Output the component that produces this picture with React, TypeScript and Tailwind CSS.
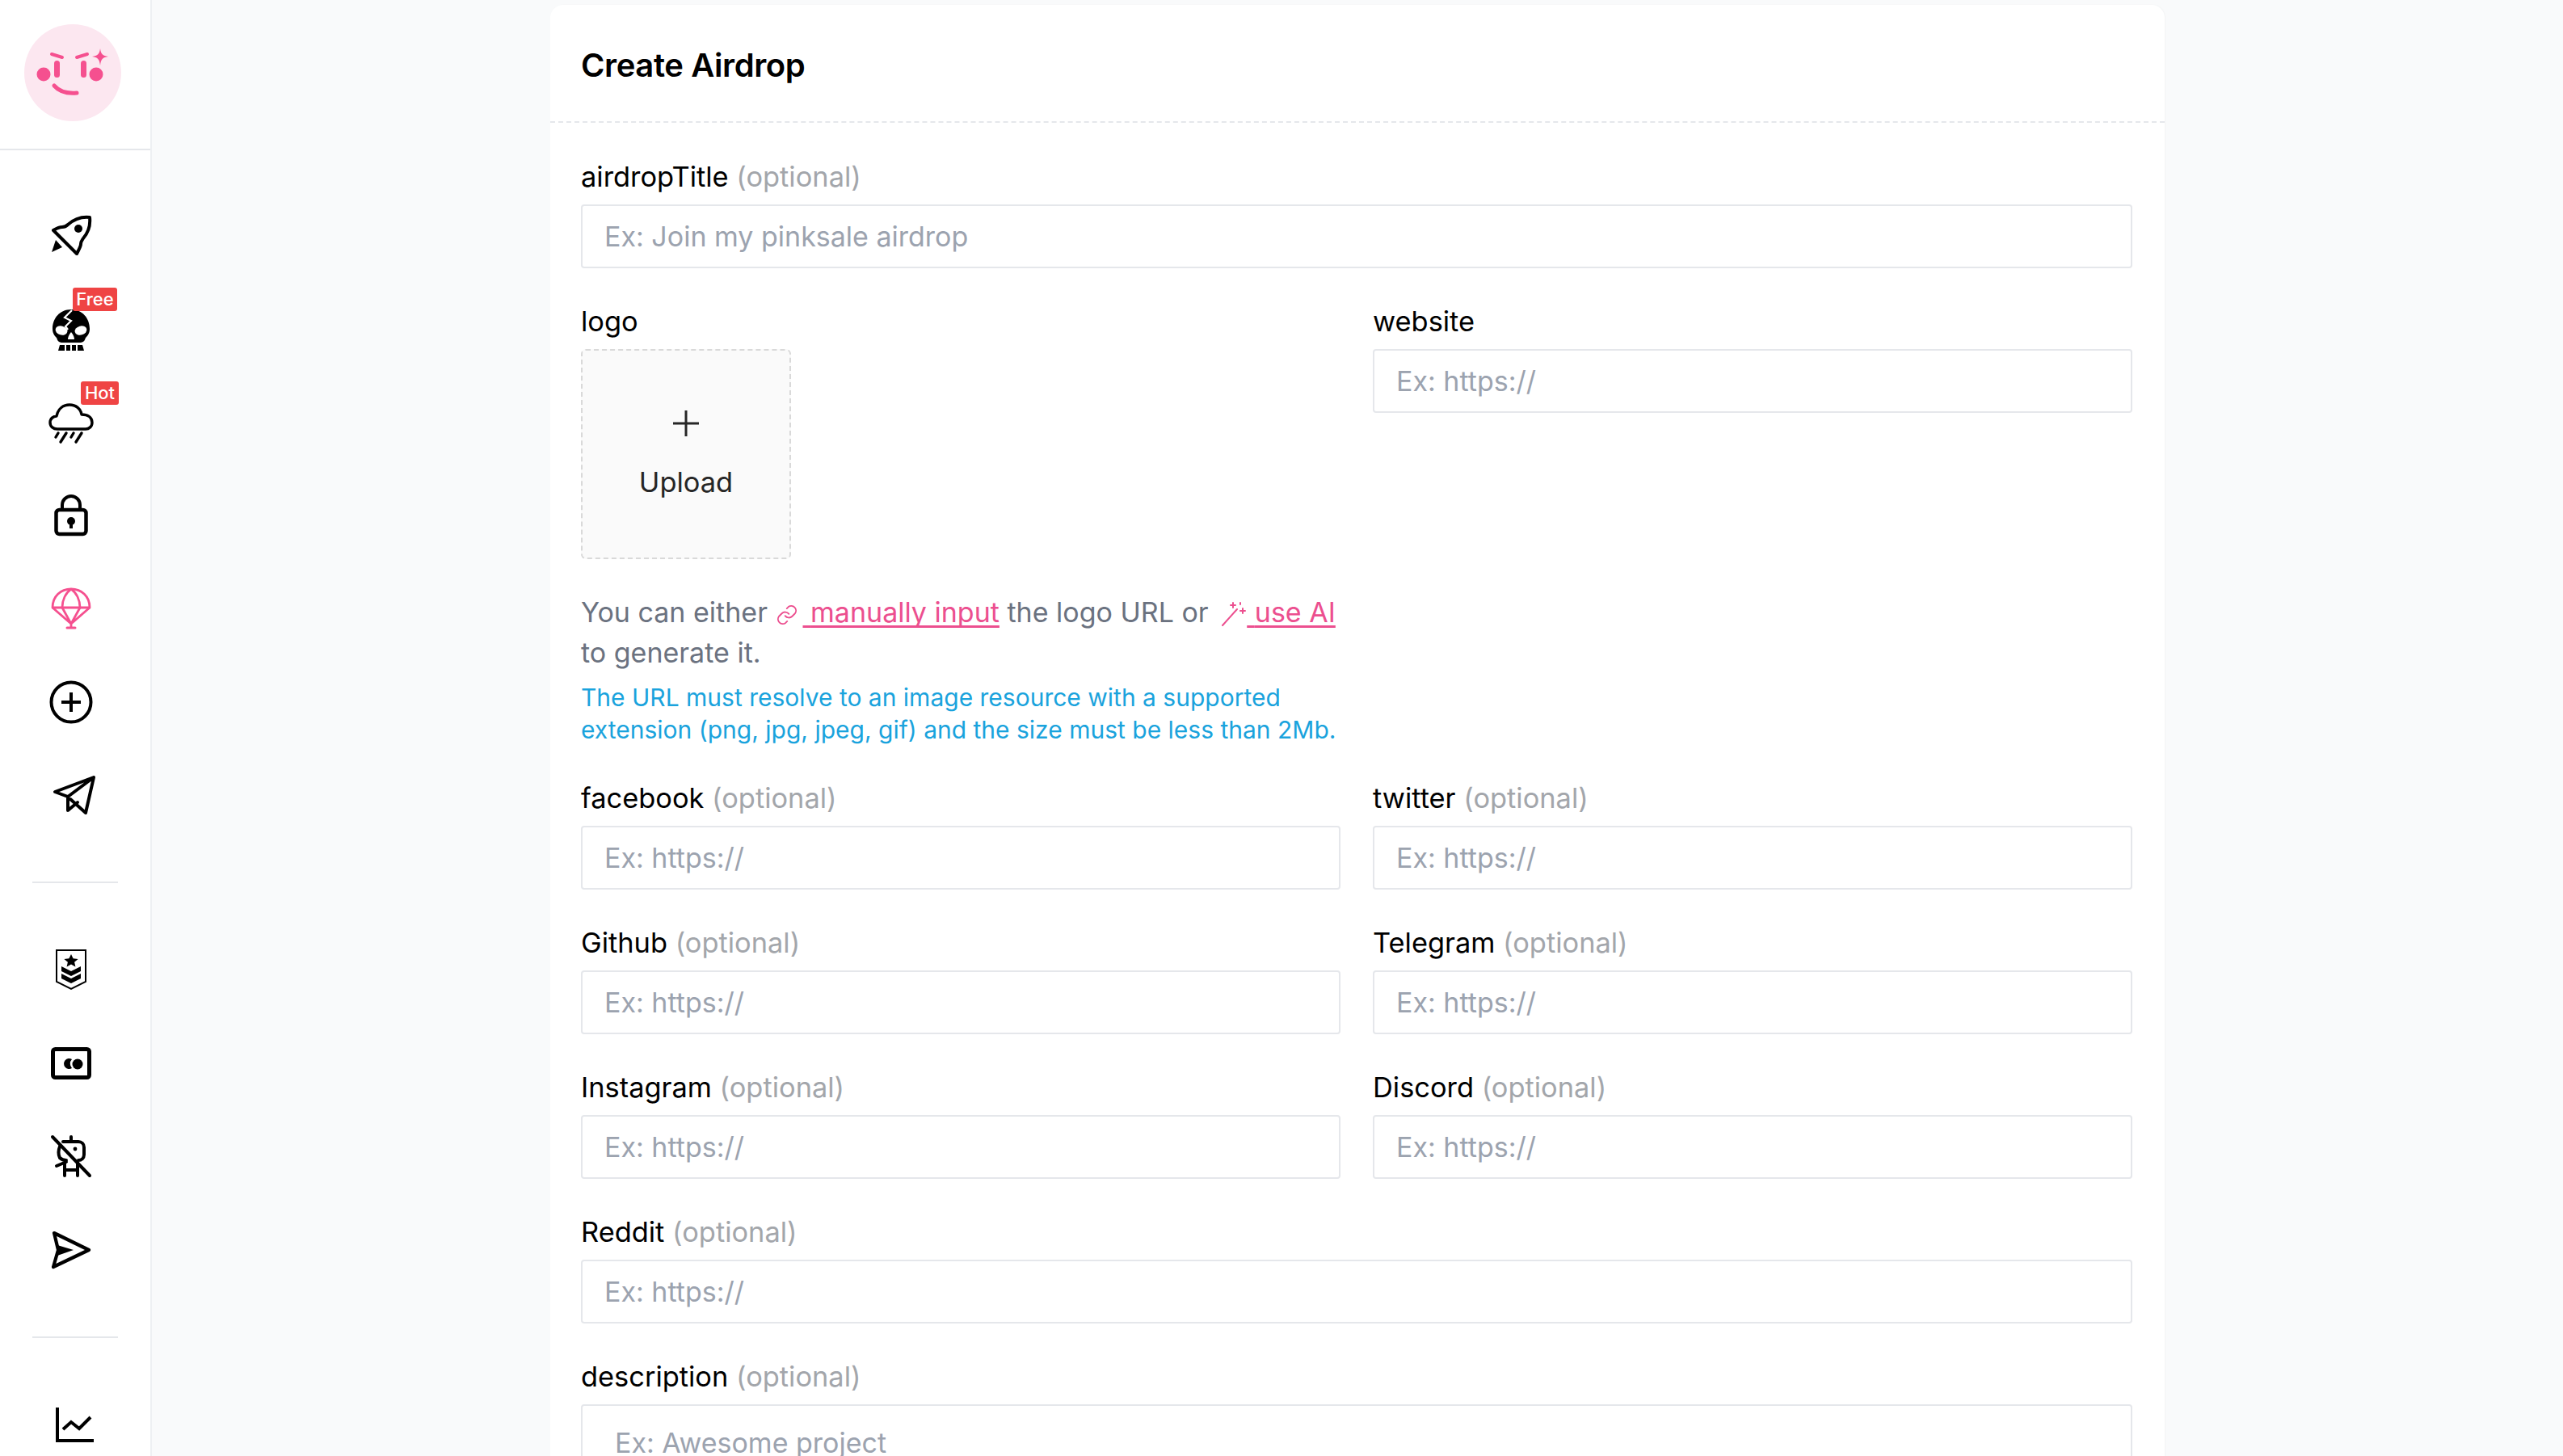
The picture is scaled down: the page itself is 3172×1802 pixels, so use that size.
import React from "react";

const P = "#f5508f";

function Logo() {
  return (
    <svg width="120" height="120" viewBox="0 0 120 120">
      <circle cx="60" cy="60" r="60" fill="#fce7f0" />
      <g fill="#f5508f">
        <circle cx="24" cy="62" r="8.5" />
        <circle cx="89" cy="62" r="8.5" />
        <rect x="37" y="45" width="7" height="21" rx="3.5" />
        <rect x="70" y="45" width="7" height="21" rx="3.5" />
        <path d="M94 30c1 7 3 9 10 10-7 1-9 3-10 11-1-8-3-10-10-11 7-1 9-3 10-10z" />
      </g>
      <g fill="none" stroke="#f5508f" strokeLinecap="round">
        <path d="M34 37l13 4M65 41l13-4" strokeWidth="4" />
        <path d="M37 76c7 8 17 10 28 9" strokeWidth="5" />
      </g>
    </svg>
  );
}

const S = { fill: "none", stroke: "#000", strokeWidth: 4, strokeLinecap: "round", strokeLinejoin: "round" } as const;

function Rocket() {
  return (
    <svg width="52" height="52" viewBox="0 0 52 52">
      <path {...S} d="M22 12C30 5 40 2 49 3c1 9-1 18-8 26-2 3-3 4-3 7 0 3-2 6-5 12L4 19c5-3 8-4 11-4 3 0 5-1 7-3z" />
      <circle cx="35" cy="17" r="5" fill="#000" />
      <path d="M7 31l8 9-13 6z" fill="#000" />
    </svg>
  );
}
function Skull() {
  return (
    <svg width="50" height="58" viewBox="0 0 50 58">
      <path d="M25 2C11 2 2 13 2 26c0 6 3 9 5 11 1 2 1 5 6 6h24c5-1 5-4 6-6 2-2 5-5 5-11C48 13 39 2 25 2z" fill="#000" />
      <path d="M26 3l-9 9 8 4-7 7 3 4" fill="none" stroke="#fff" strokeWidth="2.2" />
      <ellipse cx="13" cy="28" rx="7.5" ry="5.5" fill="#fff" transform="rotate(15 13 28)" />
      <ellipse cx="37" cy="28" rx="7.5" ry="5.5" fill="#fff" transform="rotate(-15 37 28)" />
      <path d="M25 30c-3 3-4 7-4 9h8c0-2-1-6-4-9z" fill="#fff" />
      <path d="M11 46h6v7H9zM19 46h5v7h-5zM26 46h5v7h-5zM33 46h6l2 7h-8z" fill="#000" />
    </svg>
  );
}
function Rain() {
  return (
    <svg width="56" height="56" viewBox="0 0 56 56">
      <path {...S} strokeWidth={3.4} d="M11 37c-5 0-9-3-9-8 0-5 4-8 8-8 2-10 9-14 16-14 8 0 14 5 15 12 7 0 13 3 13 10 0 5-4 8-8 8z" />
      <path {...S} strokeWidth={3.4} d="M12 42l-3 5M22 42l-7 11M31 42l-3 5M41 42l-7 11" />
    </svg>
  );
}
function Lock() {
  return (
    <svg width="42" height="52" viewBox="0 0 42 52">
      <rect x="2.5" y="19" width="37" height="30" rx="4" fill="none" stroke="#000" strokeWidth="4.5" />
      <path d="M10 19v-6a11 11 0 0 1 22 0v6" fill="none" stroke="#000" strokeWidth="4" />
      <circle cx="21" cy="33" r="5" fill="#000" />
      <path d="M19 33h4v9h-4z" fill="#000" />
    </svg>
  );
}
function Parachute() {
  return (
    <svg width="50" height="52" viewBox="0 0 50 52" fill="none" stroke={P} strokeWidth="2.8" strokeLinejoin="round">
      <path d="M2 25C2 11 12 2 25 2s23 9 23 23z" />
      <path d="M25 2c-7 5-11 14-11 23M25 2c7 5 11 14 11 23" />
      <path d="M2 25l23 20 23-20M14 25l11 20 11-20M25 45v4" />
      <path d="M20 50h10" strokeWidth="3" strokeLinecap="round" />
    </svg>
  );
}
function PlusCircle() {
  return (
    <svg width="54" height="54" viewBox="0 0 54 54" fill="none" stroke="#000" strokeWidth="4">
      <circle cx="27" cy="27" r="24.5" />
      <path d="M27 15v24M15 27h24" />
    </svg>
  );
}
function Plane() {
  return (
    <svg width="54" height="50" viewBox="0 0 54 50" {...S}>
      <path d="M51 3L3 21l16 6zM51 3L41 47 22 30M51 3L19 27v17l12-10" />
    </svg>
  );
}
function Shield() {
  return (
    <svg width="40" height="52" viewBox="0 0 40 52">
      <path d="M2 2h36v39L20 50 2 41z" fill="none" stroke="#000" strokeWidth="2" />
      <path d="M20 7l2.6 5.2 6 .7-4.5 3.8 1.3 5.8-5.4-3-5.4 3 1.3-5.8-4.5-3.8 6-.7z" fill="#000" />
      <path d="M8 22l12 6 12-6v6l-12 6-12-6zM8 31l12 6 12-6v6l-12 6-12-6z" fill="#000" />
    </svg>
  );
}
function CardIcon() {
  return (
    <svg width="50" height="40" viewBox="0 0 50 40">
      <rect x="2.5" y="2.5" width="45" height="35" rx="3" fill="none" stroke="#000" strokeWidth="5" />
      <path d="M26 15a6.5 6.5 0 1 0 0 11 8 8 0 0 1 0-11z" fill="#000" />
      <circle cx="33" cy="21" r="6.5" fill="#000" />
    </svg>
  );
}
function RobotOff() {
  return (
    <svg width="52" height="54" viewBox="0 0 52 54" {...S}>
      <path d="M3 3l46 48" />
      <path d="M26 3v5M16 9h19c4 0 7 3 7 7v9c0 4-3 7-7 7M12 15c-2 5-2 10 0 14 2 2 5 3 8 3M20 34l-12 5M18 34v17M34 34v17M18 44h16" />
      <circle cx="31" cy="18" r="2.4" fill="#000" stroke="none" />
    </svg>
  );
}
function Send() {
  return (
    <svg width="50" height="48" viewBox="0 0 50 48">
      <path d="M4 3l43 21L3 45l6-21z" fill="none" stroke="#000" strokeWidth="4.2" strokeLinejoin="round" />
      <path d="M8 18l20 6-20 7 2-7z" fill="#000" />
    </svg>
  );
}
function Chart() {
  return (
    <svg width="48" height="44" viewBox="0 0 48 44" fill="none" stroke="#000" strokeWidth="4">
      <path d="M3 0v41h45" />
      <path d="M10 27l10-9 10 8 14-14" />
    </svg>
  );
}

function Badge({ children, cls }: { children: React.ReactNode; cls: string }) {
  return (
    <span className={`absolute top-[7px] rounded-[3px] bg-[#ef4444] text-center text-[22px] leading-[29px] font-medium text-white ${cls}`}>
      {children}
    </span>
  );
}

function Nav({ children }: { children: React.ReactNode }) {
  return <div className="relative flex h-[115.4px] items-center justify-center pr-[10px]">{children}</div>;
}

function Divider() {
  return <div className="mx-[40px] my-[50px] h-[2px] w-[106px] bg-[#e5e7eb]" />;
}

function Opt() {
  return <span className="text-[#a3a6ab]"> (optional)</span>;
}

function Field({ label, optional, placeholder }: { label: string; optional?: boolean; placeholder: string }) {
  return (
    <div className="flex min-w-0 flex-1 flex-col">
      <label className="mb-[17px] h-[36px] text-[34.4px] leading-[38px] text-black">
        {label}
        {optional && <Opt />}
      </label>
      <input
        readOnly
        placeholder={placeholder}
        className="h-[79px] w-full rounded-[4px] border-2 border-[#e5e7eb] bg-white px-[27px] text-[34px] text-black outline-none placeholder:text-[#9ca3af]"
      />
    </div>
  );
}

function Row({ children }: { children: React.ReactNode }) {
  return <div className="mb-[47px] flex gap-[40px]">{children}</div>;
}

export default function App() {
  return (
    <div className="flex h-[1802px] w-[3172px] overflow-hidden bg-[#f9fafb] font-['Inter',sans-serif] [font-optical-sizing:none]">
      <aside className="w-[188px] shrink-0 border-r-2 border-[#eef0f3] bg-white">
        <div className="flex h-[186px] items-start border-b-2 border-[#e5e7eb] pt-[30px] pl-[30px]">
          <Logo />
        </div>
        <div className="pt-[48px]">
          <Nav><Rocket /></Nav>
          <Nav><div className="mt-[5px]"><Skull /></div><Badge cls="left-[90px] w-[55px]">Free</Badge></Nav>
          <Nav><Rain /><Badge cls="left-[100px] w-[47px]">Hot</Badge></Nav>
          <Nav><Lock /></Nav>
          <Nav><Parachute /></Nav>
          <Nav><PlusCircle /></Nav>
          <Nav><div className="ml-[8px]"><Plane /></div></Nav>
          <div className="-mt-[1px]"><Divider /></div>
          <Nav><Shield /></Nav>
          <Nav><CardIcon /></Nav>
          <Nav><RobotOff /></Nav>
          <Nav><Send /></Nav>
          <Divider />
          <Nav><div className="ml-[8px]"><Chart /></div></Nav>
        </div>
      </aside>
      <main className="flex flex-1 justify-center pt-[6px]">
        <div className="h-[2000px] w-[1998px] rounded-t-[16px] bg-white shadow-[1px_0_2px_rgba(0,0,0,0.03)]">
          <div className="flex h-[146px] items-center border-b-2 border-dashed border-[#e5e7eb] px-[38px] pt-[5px]">
            <h1 className="text-[40px] leading-[48px] font-semibold tracking-[-0.4px] text-black">Create Airdrop</h1>
          </div>
          <div className="pt-[48px] pr-[40px] pl-[38px]">
            <Row><Field label="airdropTitle" optional placeholder="Ex: Join my pinksale airdrop" /></Row>
            <div className="mb-[46px] flex gap-[40px]">
              <div className="min-w-0 flex-1">
                <div className="mb-[17px] h-[36px] text-[34.4px] leading-[38px] text-black">logo</div>
                <div className="flex h-[260px] w-[260px] flex-col items-center rounded-[6px] border-2 border-dashed border-[#d9d9d9] bg-[#fafafa] pt-[74px]">
                  <svg width="32" height="32" viewBox="0 0 32 32" stroke="#262626" strokeWidth="3">
                    <path d="M16 0v32M0 16h32" />
                  </svg>
                  <span className="mt-[35px] text-[34.4px] leading-[44px] text-[#262626]">Upload</span>
                </div>
                <div className="mt-[41px] text-[34px] leading-[50px] text-[#6b7280]">
                  You can either{" "}
                  <span className="text-[#ec4f8f] underline underline-offset-[4px] [text-decoration-skip-ink:none]">
                    <svg width="28" height="30" viewBox="0 0 24 24" fill="none" stroke="#ec4f8f" strokeWidth="1.6" strokeLinecap="round" strokeLinejoin="round" className="mr-[6px] inline-block align-[-6px]">
                      <path d="M10 13a5 5 0 0 0 7.5.5l3-3a5 5 0 0 0-7-7l-1.7 1.7" />
                      <path d="M14 11a5 5 0 0 0-7.5-.5l-3 3a5 5 0 0 0 7 7l1.7-1.7" />
                    </svg>
                    {" "}manually input
                  </span>{" "}
                  the logo URL or{" "}
                  <span className="text-[#ec4f8f] underline underline-offset-[4px] [text-decoration-skip-ink:none]">
                    <svg width="32" height="32" viewBox="0 0 32 32" fill="none" stroke="#ec4f8f" strokeWidth="2" strokeLinecap="round" className="ml-[6px] inline-block align-[-6px]">
                      <path d="M2 30L20 10" />
                      <path d="M15 2v6M12 5h6M27 9v6M24 12h6M24 2v2" />
                    </svg>
                    {" "}use AI
                  </span>{" "}
                  to generate it.
                </div>
                <div className="mt-[10px] text-[30px] leading-[40px] text-[#1aa3dd]">
                  The URL must resolve to an image resource with a supported extension (png, jpg, jpeg, gif) and the size must be less than 2Mb.
                </div>
              </div>
              <div className="min-w-0 flex-1">
                <Field label="website" placeholder="Ex: https://" />
              </div>
            </div>
            <Row>
              <Field label="facebook" optional placeholder="Ex: https://" />
              <Field label="twitter" optional placeholder="Ex: https://" />
            </Row>
            <Row>
              <Field label="Github" optional placeholder="Ex: https://" />
              <Field label="Telegram" optional placeholder="Ex: https://" />
            </Row>
            <Row>
              <Field label="Instagram" optional placeholder="Ex: https://" />
              <Field label="Discord" optional placeholder="Ex: https://" />
            </Row>
            <Row><Field label="Reddit" optional placeholder="Ex: https://" /></Row>
            <div>
              <div className="mb-[17px] h-[36px] text-[34.4px] leading-[38px] text-black">
                description
                <Opt />
              </div>
              <div className="h-[200px] rounded-[4px] border-2 border-[#e5e7eb] px-[40px] pt-[20px] text-[34px] text-[#9ca3af]">
                Ex: Awesome project
              </div>
            </div>
          </div>
        </div>
      </main>
    </div>
  );
}
